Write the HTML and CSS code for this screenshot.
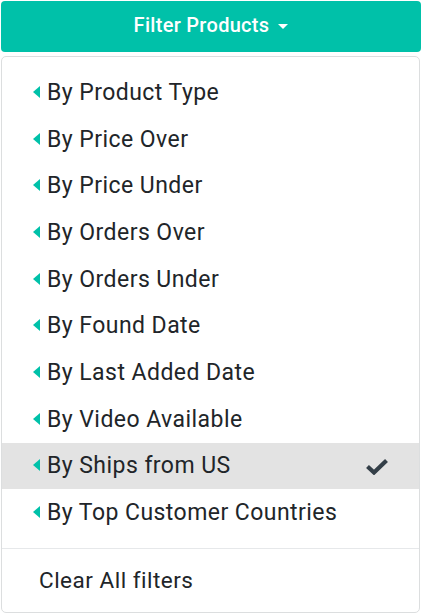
FILE: index.html
```html
<!DOCTYPE html>
<html>
<head>
<meta charset="utf-8">
<link rel="stylesheet" href="styles.css">
</head>
<body>
<div class="dropdown">
  <button class="toggle">Filter Products <span class="caret"></span></button>
  <div class="menu">
    <ul class="items">
      <li class="item"><span class="arrow"></span>By Product Type</li>
      <li class="item"><span class="arrow"></span>By Price Over</li>
      <li class="item"><span class="arrow"></span>By Price Under</li>
      <li class="item"><span class="arrow"></span>By Orders Over</li>
      <li class="item"><span class="arrow"></span>By Orders Under</li>
      <li class="item"><span class="arrow"></span>By Found Date</li>
      <li class="item"><span class="arrow"></span>By Last Added Date</li>
      <li class="item"><span class="arrow"></span>By Video Available</li>
      <li class="item active"><span class="arrow"></span>By Ships from US
        <svg class="check" viewBox="0 0 22 17" width="22" height="17"><path d="M1.5 8.5 L8 14.5 L20.5 2.5" fill="none" stroke="#343f48" stroke-width="4.2" stroke-linejoin="miter"/></svg>
      </li>
      <li class="item"><span class="arrow"></span>By Top Customer Countries</li>
    </ul>
    <div class="divider"></div>
    <div class="clear">Clear All filters</div>
  </div>
</div>
</body>
</html>
```

FILE: styles.css
```css
* { box-sizing: border-box; }
body {
  margin: 0;
  padding: 1px 3px 2px 1px;
  font-family: Roboto, "Noto Sans", sans-serif;
  background: #fff;
}
.dropdown {
  display: flex;
  flex-direction: column;
  gap: 4px;
}
.toggle {
  height: 51px;
  width: 420px;
  margin-right: -1px;
  border: none;
  border-radius: 4px;
  background: #00c1a9;
  color: #fff;
  font-family: Roboto, sans-serif;
  font-size: 20px;
  font-weight: 500;
  letter-spacing: 0.3px;
  display: flex;
  align-items: center;
  justify-content: center;
  gap: 9px;
  padding: 0 0 3px 0;
}
.caret {
  width: 0;
  height: 0;
  border-left: 5px solid transparent;
  border-right: 5px solid transparent;
  border-top: 5px solid #fff;
  margin-top: 2px;
}
.menu {
  border: 1px solid #dcdedf;
  border-radius: 5px;
  height: 557px;
  padding-top: 12px;
}
.items {
  list-style: none;
  margin: 0;
  padding: 0;
}
.item {
  height: 46.7px;
  display: flex;
  align-items: center;
  padding-left: 31px;
  padding-right: 31px;
  font-size: 23px;
  letter-spacing: 0.45px;
  color: #212529;
}
.item.active {
  background: #e3e3e3;
}
.arrow {
  width: 0;
  height: 0;
  border-top: 6px solid transparent;
  border-bottom: 6px solid transparent;
  border-right: 7px solid #00c1a9;
  margin-right: 7px;
  margin-top: -1px;
}
.check {
  margin-left: auto;
  margin-top: 1px;
}
.divider {
  height: 1px;
  background: #e6e8ea;
  margin-top: 12px;
}
.clear {
  height: 63px;
  display: flex;
  align-items: center;
  padding-left: 37px;
  font-size: 22.5px;
  letter-spacing: 0.5px;
  color: #212529;
}
```
